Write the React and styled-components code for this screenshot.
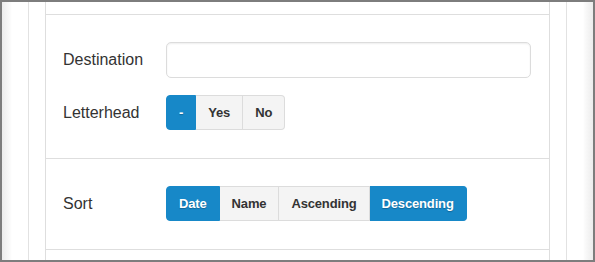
import styled, { createGlobalStyle } from "styled-components";

const GlobalStyle = createGlobalStyle`
  html, body {
    margin: 0;
    padding: 0;
    background: #fff;
  }
  body {
    font-family: "Liberation Sans", Arial, sans-serif;
    color: #333;
  }
  *, *::before, *::after {
    box-sizing: border-box;
  }
`;

const Frame = styled.div`
  width: 595px;
  height: 262px;
  border: 2px solid #7d7d7d;
  overflow: hidden;
  display: flex;
`;

const Shell = styled.div`
  flex: 1;
  display: flex;
  padding: 0 10px;
  background: linear-gradient(
      to right,
      #ececec 0,
      #fafafa 8px,
      #fff 10px,
      #fff calc(100% - 10px),
      #fafafa calc(100% - 8px),
      #ececec 100%
    );
`;

const Column = styled.div`
  flex: 1;
  background: #fff;
  padding: 0 16px;
  margin: 0 16px;
  border-left: 1px solid #e2e2e2;
  border-right: 1px solid #e2e2e2;
  display: flex;
`;

const Panel = styled.div`
  flex: 1;
  border-left: 1px solid #dedede;
  border-right: 1px solid #dedede;
  display: flex;
  flex-direction: column;
`;

const Section = styled.div`
  border-top: ${(p) => (p.$first ? "none" : "1px solid #dedede")};
  height: ${(p) => p.$height}px;
  padding: ${(p) => (p.$first ? "0" : "27px 18px 0 17px")};
  display: flex;
  flex-direction: column;
  gap: 17px;
  flex-shrink: 0;
`;

const Row = styled.div`
  display: flex;
  align-items: center;
`;

const Label = styled.label`
  width: 103px;
  font-size: 16px;
  color: #333;
  flex-shrink: 0;
`;

const TextInput = styled.input`
  flex: 1;
  height: 36px;
  border: 1px solid #dcdcdc;
  border-radius: 5px;
  box-shadow: inset 0 1px 2px rgba(0, 0, 0, 0.07);
  outline: none;
  padding: 0 10px;
  font-family: inherit;
  font-size: 14px;
`;

const Group = styled.div`
  display: flex;
  height: 35px;
`;

const Btn = styled.button`
  font-family: "Liberation Sans", Arial, sans-serif;
  font-weight: bold;
  font-size: 13px;
  letter-spacing: -0.15px;
  padding: 0 12px;
  margin: 0;
  height: 35px;
  border: 1px solid ${(p) => (p.$active ? "#1788c8" : "#dcdcdc")};
  border-left-width: 0;
  background: ${(p) => (p.$active ? "#1788c8" : "#f4f4f4")};
  color: ${(p) => (p.$active ? "#fff" : "#333")};
  text-shadow: ${(p) => (p.$active ? "0 1px 1px rgba(0,0,0,0.25)" : "none")};
  cursor: pointer;

  &:first-child {
    border-left-width: 1px;
    border-radius: 4px 0 0 4px;
  }
  &:last-child {
    border-radius: 0 4px 4px 0;
  }
`;

const ButtonGroup = ({ options, active }) => (
  <Group>
    {options.map((o) => (
      <Btn key={o} $active={active.includes(o)}>
        {o}
      </Btn>
    ))}
  </Group>
);

export default function App() {
  return (
    <>
      <GlobalStyle />
      <Frame>
        <Shell>
          <Column>
            <Panel>
              <Section $first $height={12} />
              <Section $height={144}>
                <Row>
                  <Label>Destination</Label>
                  <TextInput />
                </Row>
                <Row>
                  <Label>Letterhead</Label>
                  <ButtonGroup options={["-", "Yes", "No"]} active={["-"]} />
                </Row>
              </Section>
              <Section $height={91}>
                <Row>
                  <Label>Sort</Label>
                  <ButtonGroup
                    options={["Date", "Name", "Ascending", "Descending"]}
                    active={["Date", "Descending"]}
                  />
                </Row>
              </Section>
              <Section $height={20} />
            </Panel>
          </Column>
        </Shell>
      </Frame>
    </>
  );
}
